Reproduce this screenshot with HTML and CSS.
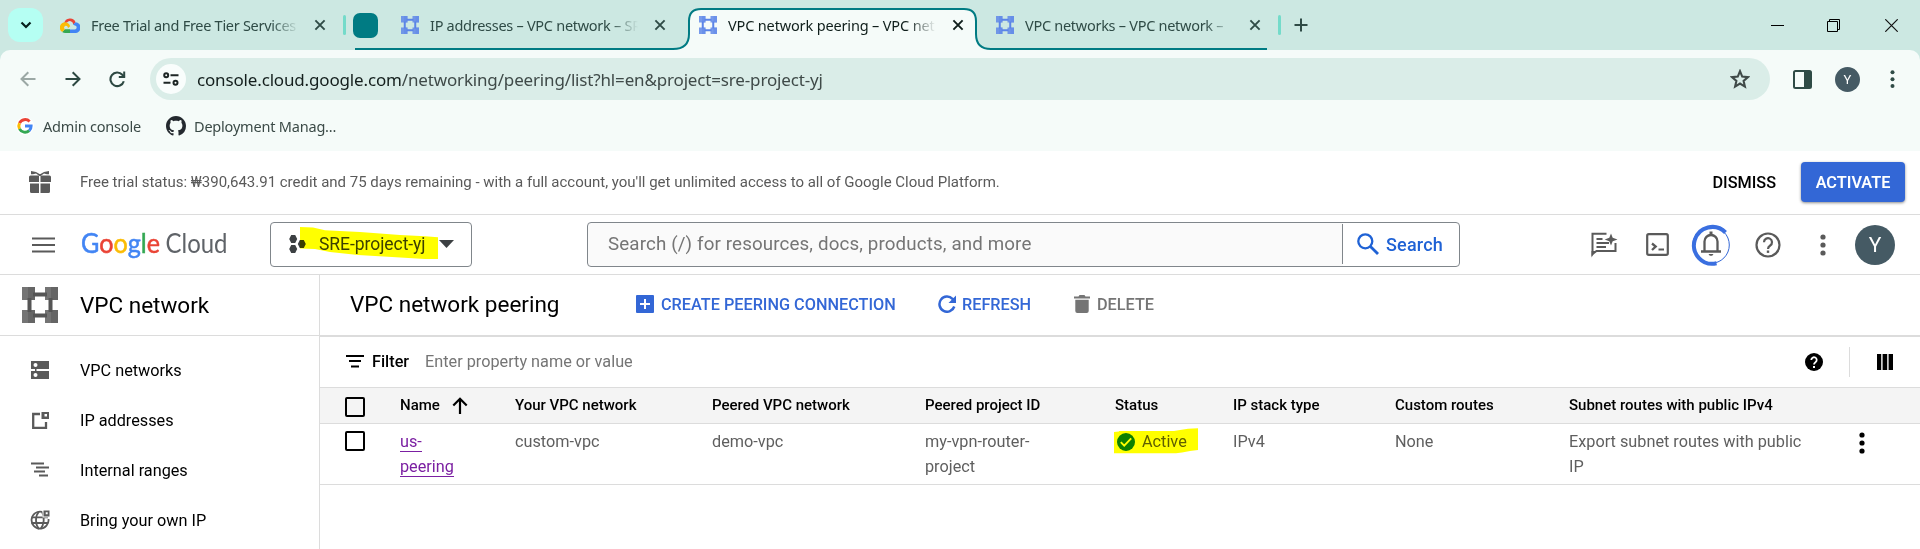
FILE: index.html
```html
<!DOCTYPE html>
<html lang="en">
<head>
<meta charset="utf-8">
<title>VPC network peering – VPC network</title>
<link rel="stylesheet" href="styles.css">
</head>
<body>
<svg class="defs" width="0" height="0" aria-hidden="true">
  <defs>
    <symbol id="vpc" viewBox="0 0 36 36">
      <path d="M5.500 11h4v14h-4zM26.500 11h4v14h-4zM11 5.500h14v4H11zM11 26.500h14v4H11z"/>
      <path d="M0 0h13v13H0zM23 0h13v13H23zM0 23h13v13H0zM23 23h13v13H23z" opacity=".82"/>
      <path d="M6 0h7v13H6zM29 0h7v13h-7zM6 23h7v13H6zM29 23h7v13h-7z" opacity=".45"/>
    </symbol>
    <symbol id="x" viewBox="0 0 12 12"><path d="M1.400 1.400l9.200 9.200M10.600 1.400l-9.200 9.200" fill="none" stroke="currentColor" stroke-width="1.900"/></symbol>
    <symbol id="dots" viewBox="0 0 6 22"><circle cx="3" cy="3" r="2.600"/><circle cx="3" cy="11" r="2.600"/><circle cx="3" cy="19" r="2.600"/></symbol>
  </defs>
</svg>

<div class="strip">
  <svg class="outline" width="1920" height="52" viewBox="0 0 1920 52">
    <path d="M673 52V49Q689 49 689 34V21Q689 9 701 9H964Q976 9 976 21V34Q976 49 991 49V52Z" fill="#f5fbf9"/>
    <path d="M355 49H673Q689 49 689 34V21Q689 9 701 9H964Q976 9 976 21V34Q976 49 991 49H1267" fill="none" stroke="#007b83" stroke-width="2"/>
  </svg>
  <div class="tabsearch"><svg width="12" height="8" viewBox="0 0 12 8"><path d="M1.500 1.500L6 6l4.500-4.500" fill="none" stroke="#06201c" stroke-width="2.200"/></svg></div>
  <div class="tab tab-first">
    <svg width="20" height="16" viewBox="0 0 20 16">
      <path d="M4.200 6.200A6 6 0 0 1 15.600 5.200L13.200 7.500A3.400 3.400 0 0 0 7 5.500z" fill="#ea4335"/>
      <path d="M15.600 5.200A5.400 5.400 0 0 1 14.700 16H10v-3.600h4.600A1.900 1.900 0 0 0 14.800 8.500L13 7.600z" fill="#4285f4"/>
      <path d="M10 16H5.300A5.300 5.300 0 0 1 2.200 15L4.800 12.300H10z" fill="#34a853"/>
      <path d="M2.200 15A5.300 5.300 0 1 1 10.200 9.200L7.600 11.600A1.850 1.850 0 1 0 5 12.300z" fill="#fbbc05"/>
    </svg>
    <span class="tabtitle">Free Trial and Free Tier Services</span>
    <svg class="close" width="12" height="12"><use href="#x"/></svg>
  </div>
  <i class="tabsep"></i>
  <i class="chip"></i>
  <div class="tab tab-ip">
    <svg class="fav" width="18" height="18"><use href="#vpc"/></svg>
    <span class="tabtitle">IP addresses – VPC network – SR</span>
    <svg class="close" width="12" height="12"><use href="#x"/></svg>
  </div>
  <div class="tab tab-active">
    <svg class="fav" width="18" height="18"><use href="#vpc"/></svg>
    <span class="tabtitle">VPC network peering – VPC net</span>
    <svg class="close" width="12" height="12"><use href="#x"/></svg>
  </div>
  <div class="tab tab-nets">
    <svg class="fav" width="18" height="18"><use href="#vpc"/></svg>
    <span class="tabtitle">VPC networks – VPC network –</span>
    <svg class="close" width="12" height="12"><use href="#x"/></svg>
  </div>
  <i class="tabsep"></i>
  <svg class="newtab" width="14" height="14" viewBox="0 0 14 14"><path d="M7 .5v13M.5 7h13" stroke="#2f4b46" stroke-width="2"/></svg>
  <div class="winctl">
    <svg width="13" height="13" viewBox="0 0 13 13"><path d="M0 6.500h13" stroke="#000"/></svg>
    <svg width="13" height="13" viewBox="0 0 13 13"><path d="M.5 2.500h10v10H.5zM2.500 2.500v-2h10v10h-2" fill="none" stroke="#000"/></svg>
    <svg class="winclose" width="13" height="13" viewBox="0 0 13 13"><path d="M.3.3l12.400 12.400M12.700.3L.3 12.700" stroke="#111" stroke-width="1.200"/></svg>
  </div>
</div>

<div class="toolbar">
  <div class="nav">
    <svg class="back" width="16" height="16" viewBox="0 0 16 16"><path d="M15.500 8H2M8.300 1.200L1.500 8l6.800 6.800" fill="none" stroke="#9ba8a5" stroke-width="2"/></svg>
    <svg class="fwd" width="16" height="16" viewBox="0 0 16 16"><path d="M.5 8H14M7.700 1.200L14.500 8l-6.800 6.800" fill="none" stroke="#2d4842" stroke-width="2"/></svg>
    <svg class="reload" width="17" height="17" viewBox="0 0 17 17"><path d="M14.800 10.200A6.800 6.800 0 1 1 13.300 3.700L15.500 6" fill="none" stroke="#2d4842" stroke-width="2.100"/><path d="M16.200 .5V7H9.800V5h4.400V.5z" fill="#2d4842"/></svg>
    <div class="omni">
      <span class="site"><svg width="16" height="14" viewBox="0 0 16 14"><g fill="none" stroke="#1d2625" stroke-width="2"><circle cx="3.200" cy="3.200" r="2"/><path d="M7.500 3.200H15.500M.5 10.800H7.500"/><circle cx="12.500" cy="10.800" r="2"/></g></svg></span>
      <span class="url"><b>console.cloud.google.com</b>/networking/peering/list?hl=en&amp;project=sre-project-yj</span>
      <svg class="star" width="20" height="20" viewBox="0 0 20 20"><path d="M10 2.200l2.200 5.400 5.800.5-4.400 3.800 1.300 5.700L10 14.600l-4.900 3 1.300-5.700L2 8.100l5.800-.5z" fill="none" stroke="#3f4a48" stroke-width="2.100"/></svg>
    </div>
    <svg class="panel" width="19" height="19" viewBox="0 0 19 19"><rect x="1" y="1" width="17" height="17" rx="1.500" fill="none" stroke="#2f4b46" stroke-width="2"/><path d="M11 1h7v17h-7z" fill="#2f4b46"/></svg>
    <span class="ava small">Y</span>
    <svg class="bdots" width="5" height="18" viewBox="0 0 5 18" fill="#2f4b46"><circle cx="2.500" cy="2.300" r="2"/><circle cx="2.500" cy="9.200" r="2"/><circle cx="2.500" cy="16" r="2"/></svg>
  </div>
  <div class="marks">
    <svg width="18" height="18" viewBox="0 0 18 18"><circle cx="9" cy="9" r="9" fill="#fff"/><g fill="none" stroke-width="3"><path d="M13.600 4.500A6.200 6.200 0 0 0 3.500 6.200" stroke="#ea4335"/><path d="M3.500 6.200a6.200 6.200 0 0 0 0 5.700" stroke="#fbbc05"/><path d="M3.500 11.900a6.200 6.200 0 0 0 9.700 1.700" stroke="#34a853"/><path d="M13.200 13.600A6.200 6.200 0 0 0 15.100 9H9" stroke="#4285f4"/></g></svg>
    <span class="mk1">Admin console</span>
    <svg width="20" height="20" viewBox="0 0 16 16"><path fill="#24292f" d="M8 0C3.580 0 0 3.580 0 8c0 3.540 2.290 6.530 5.470 7.590.4.070.55-.17.55-.38 0-.19-.01-.82-.01-1.490-2.010.37-2.530-.49-2.690-.94-.09-.23-.48-.94-.82-1.130-.28-.15-.68-.52-.01-.53.63-.01 1.080.58 1.230.82.72 1.210 1.870.87 2.330.66.07-.52.28-.87.51-1.070-1.780-.2-3.640-.89-3.640-3.950 0-.87.31-1.590.82-2.150-.08-.2-.36-1.020.08-2.120 0 0 .67-.21 2.200.82.64-.18 1.320-.27 2-.27s1.360.09 2 .27c1.530-1.040 2.200-.82 2.200-.82.44 1.100.16 1.920.08 2.120.51.56.82 1.270.82 2.150 0 3.070-1.870 3.750-3.650 3.950.29.25.54.73.54 1.480 0 1.070-.01 1.930-.01 2.200 0 .21.15.46.55.38A8.010 8.010 0 0 0 16 8c0-4.420-3.580-8-8-8z"/></svg>
    <span class="mk2">Deployment Manag...</span>
  </div>
</div>

<div class="promo">
  <svg width="24" height="24" viewBox="0 0 24 24" fill="#5a5a5a"><path d="M3 1l5 1 3.500 2h1L16 2l5-1v3.300h-2L16 3.600 12.500 6h-1L8 3.600 5 4.300H3z"/><path d="M2.500 5.500H11V12H1V7a1.500 1.500 0 0 1 1.500-1.500zM12.500 5.500H21.500A1.500 1.500 0 0 1 23 7v5H12.500zM2 13.500h9V23H3.500A1.500 1.500 0 0 1 2 21.500zM12.500 13.500H22v8a1.500 1.500 0 0 1-1.500 1.500h-8z"/></svg>
  <span class="promotext">Free trial status: ₩390,643.91 credit and 75 days remaining - with a full account, you'll get unlimited access to all of Google Cloud Platform.</span>
  <span class="dismiss">DISMISS</span>
  <span class="activate">ACTIVATE</span>
</div>

<div class="header">
  <svg class="burger" width="23" height="16" viewBox="0 0 23 16"><path d="M0 1.500h23M0 8h23M0 14.500h23" stroke="#5a5a5a" stroke-width="2.200"/></svg>
  <svg class="logo" width="148" height="34" viewBox="0 0 148 34">
    <text x="0" y="25" textLength="79" lengthAdjust="spacingAndGlyphs" class="google"><tspan class="g-blue">G</tspan><tspan class="g-red">o</tspan><tspan class="g-yellow">o</tspan><tspan class="g-blue">g</tspan><tspan class="g-green">l</tspan><tspan class="g-red">e</tspan></text>
    <text x="84.500" y="25" textLength="62" lengthAdjust="spacingAndGlyphs" class="cloud">Cloud</text>
  </svg>
  <div class="picker">
    <svg width="18" height="18" viewBox="0 0 18 18" fill="#3c4043"><path d="M2.200 0h4L8.200 4l-2 4h-4L.2 4zM2.200 10h4l2 4-2 4h-4l-2-4zM10.800 5h4l2 4-2 4h-4l-2-4z"/></svg>
    <span>SRE-project-yj</span>
    <svg width="15" height="8" viewBox="0 0 15 8"><path d="M0 0h15L7.500 8z" fill="#3c4043"/></svg>
    <svg class="mark-project" width="140" height="34" viewBox="0 0 140 34"><path d="M0 0L13 .5 25 3.300 60 5 100 8 125 9.300l13 1V32H125L92 30 58 28 30 25 15 22 0 21.500z" fill="#ff0"/></svg>
  </div>
  <div class="search">
    <span class="hint">Search (/) for resources, docs, products, and more</span>
    <span class="go"><svg width="22" height="22" viewBox="0 0 22 22"><circle cx="8.300" cy="8.300" r="7" fill="none" stroke="#1f62d5" stroke-width="2.300"/><path d="M13.200 13.200l7.800 7.800" stroke="#1f62d5" stroke-width="2.800"/></svg><span>Search</span></span>
  </div>
  <div class="tools">
    <svg class="i-note" width="28" height="28" viewBox="0 0 28 28"><g fill="none" stroke="#5a5a5a" stroke-width="2"><path d="M16.500 2.800H2.500V23L6.500 20H25.500V12"/><path d="M6.500 8h6M6.500 12h12.500M6.500 16h9.500"/></g><path d="M21 2.500l1.700 4.300L27.500 8.500l-4.800 1.800L21 14.500l-1.700-4.200-4.600-1.800 4.600-1.700z" fill="#5a5a5a"/><path d="M1.500 20h4l-4 6.500z" fill="#5a5a5a"/></svg>
    <svg class="i-shell" width="23" height="23" viewBox="0 0 23 23"><rect x="1.200" y="1.200" width="20.600" height="20.600" rx="1.500" fill="none" stroke="#5a5a5a" stroke-width="2.200"/><path d="M6 10.500l3.700 3-3.700 3.500" fill="none" stroke="#5a5a5a" stroke-width="2.300"/><path d="M12.500 16.500h5.500" stroke="#5a5a5a" stroke-width="2"/></svg>
    <svg class="i-bell" width="42" height="44" viewBox="0 0 42 44"><circle cx="21" cy="22" r="18.300" fill="none" stroke="#3367d6" stroke-width="1"/><path d="M35.500 9.500A18.400 18.400 0 1 0 26.500 40.300" fill="none" stroke="#3a6fe0" stroke-width="4"/><path d="M14.500 28V18.500a6.500 6.500 0 0 1 13 0V28M11 28.500h20" fill="none" stroke="#5a5a5a" stroke-width="2.300"/><path d="M19.500 8.500h3V12h-3zM18.500 31h5l-1.300 1.700h-2.400z" fill="#5a5a5a"/></svg>
    <svg class="i-help" width="26" height="26" viewBox="0 0 26 26"><circle cx="13" cy="13" r="11.500" fill="none" stroke="#5a5a5a" stroke-width="2.200"/><path d="M9 10.200a4 4 0 1 1 6.200 3.300Q13 14.900 13 17" fill="none" stroke="#5a5a5a" stroke-width="2.200"/><path d="M11.800 18.500h2.400v2.400h-2.400z" fill="#5a5a5a"/></svg>
    <svg class="i-dots" width="6" height="22" fill="#5a5a5a"><use href="#dots"/></svg>
    <span class="ava big">Y</span>
  </div>
</div>

<div class="main">
  <div class="side">
    <div class="sidehead"><svg width="36" height="36" fill="#555"><use href="#vpc"/></svg><span>VPC network</span></div>
    <div class="menu">
      <div class="item"><svg width="20" height="20" viewBox="0 0 20 20"><path d="M1 1h18v8H1zM1 11h18v8H1z" fill="#5a5a5a"/><circle cx="5.500" cy="5" r="2" fill="#fff"/><circle cx="5.500" cy="15" r="2" fill="#fff"/><path d="M5 9h1.500v2H5z" fill="#5a5a5a"/></svg><span>VPC networks</span></div>
      <div class="item"><svg width="20" height="20" viewBox="0 0 20 20"><path d="M10 4H3.200v13.800h12.800V12" fill="none" stroke="#5a5a5a" stroke-width="2.300"/><path d="M11.500 2h7.500v7h-7.500zm3 2v2.500h2.500V4z" fill="#5a5a5a" fill-rule="evenodd"/></svg><span>IP addresses</span></div>
      <div class="item"><svg width="20" height="20" viewBox="0 0 20 20"><path d="M1 3.500h13M6 7.500h13M4 11.500h11M9 15.500h9" stroke="#5a5a5a" stroke-width="2.200"/></svg><span>Internal ranges</span></div>
      <div class="item"><svg width="20" height="20" viewBox="0 0 20 20"><g fill="none" stroke="#5a5a5a" stroke-width="1.800"><path d="M12 1.800A8.500 8.500 0 1 0 18.500 9"/><path d="M1.500 7.300H18M1.500 13H18M9 1.500C5 6 5 14.500 9 19M12 1.800C15 7 14 15 10.500 19"/></g><path d="M12.500 0h7.500v7.500h-7.500z" fill="#fff"/><path d="M13.500.5h6v6h-6zm2.200 1.800v2h2v-2z" fill="#5a5a5a" fill-rule="evenodd"/></svg><span>Bring your own IP</span></div>
    </div>
  </div>
  <div class="content">
    <div class="titlebar">
      <h1>VPC network peering</h1>
      <span class="act a1"><svg width="18" height="18" viewBox="0 0 18 18"><path d="M1 0h16a1 1 0 0 1 1 1v16a1 1 0 0 1-1 1H1a1 1 0 0 1-1-1V1a1 1 0 0 1 1-1z" fill="#3367d6"/><path d="M9 4v10M4 9h10" stroke="#fff" stroke-width="2"/></svg><span>CREATE PEERING CONNECTION</span></span>
      <span class="act a2"><svg width="18" height="18" viewBox="0 0 18 18"><path d="M16.300 11.500A7.600 7.600 0 1 1 14.500 3.800L16 5.300" fill="none" stroke="#3367d6" stroke-width="2.500"/><path d="M18 .5v7.500h-7.500z" fill="#3367d6"/></svg><span>REFRESH</span></span>
      <span class="act a3"><svg width="16" height="18" viewBox="0 0 16 18"><path d="M0 1.500h4.500l1-1.500h5l1 1.500H16v2H0zM1.300 4.700h13.400V16a2 2 0 0 1-2 2H3.300a2 2 0 0 1-2-2z" fill="#757575"/></svg><span>DELETE</span></span>
    </div>
    <div class="filterbar">
      <svg width="18" height="13" viewBox="0 0 18 13"><path d="M0 1h18M3 6h12M5 11.500h8" stroke="#000" stroke-width="2.200"/></svg>
      <b>Filter</b><span class="prop">Enter property name or value</span>
      <svg class="fhelp" width="18" height="18" viewBox="0 0 18 18"><circle cx="9" cy="9" r="9"/><path d="M6.300 7a2.700 2.700 0 1 1 4.200 2.200Q9 10.200 9 11.600" fill="none" stroke="#fff" stroke-width="1.800"/><path d="M8 13h2v2H8z" fill="#fff"/></svg>
      <i class="fsep"></i>
      <svg width="16" height="16" viewBox="0 0 16 16"><path d="M0 0h4.200v16H0zM5.600 0h4.600v16H5.600zM11.600 0H16v16h-4.400z"/></svg>
    </div>
    <div class="grid thead">
      <i class="box"></i>
      <span class="nm">Name<svg width="16" height="17" viewBox="0 0 16 17"><path d="M8 17V2M1.300 8.500L8 1.800l6.700 6.700" fill="none" stroke="#000" stroke-width="2.200"/></svg></span>
      <span>Your VPC network</span><span>Peered VPC network</span><span>Peered project ID</span><span>Status</span><span>IP stack type</span><span>Custom routes</span><span>Subnet routes with public IPv4</span><span></span>
    </div>
    <div class="grid trow">
      <i class="box"></i>
      <span><a>us-</a><br><a>peering</a></span>
      <span>custom-vpc</span><span>demo-vpc</span><span>my-vpn-router-<br>project</span>
      <span class="status"><svg width="18" height="18" viewBox="0 0 18 18"><circle cx="9" cy="9" r="9" fill="#0d7f0f"/><path d="M3.800 9.200l3.400 3.400 7-7.200" fill="none" stroke="#fff" stroke-width="1.900"/></svg>Active<svg class="mark-status" width="84" height="26" viewBox="0 0 84 26"><path d="M0 4l5-.5V3h55l6-1 8-1.200L84 .3V22l-8 1-8 1.500-6 .8H0z" fill="#ff0"/></svg></span>
      <span>IPv4</span><span>None</span><span>Export subnet routes with public<br>IP</span>
      <svg class="rdots" width="6" height="22"><use href="#dots"/></svg>
    </div>
  </div>
</div>
</body>
</html>
```

FILE: styles.css
```css
* { box-sizing: border-box; }
html, body { height: 549px; overflow: hidden; }
body { margin: 0; background: #fff; font-family: Roboto, "Liberation Sans", sans-serif; color: #000; }
svg { display: block; flex: none; }
i { display: block; flex: none; }
.defs { position: absolute; }

/* Browser tab strip */
.strip { position: relative; display: flex; align-items: center; height: 50px; padding-left: 8px; background: #cce8e2; font-family: "Noto Sans", "Open Sans", sans-serif; }
.outline { position: absolute; left: 0; top: 0; }
.strip > *:not(.outline) { position: relative; }
.tabsearch { display: flex; align-items: center; justify-content: center; width: 35px; height: 34px; border-radius: 12px; background: #b5fff3; }
.tab { display: flex; align-items: center; height: 50px; color: #2f4b46; font-size: 14.5px; }
.tab-first { width: 300px; padding-left: 17px; }
.tab-ip { width: 311px; padding-left: 23px; }
.tab-active { width: 288px; padding-left: 10px; color: #0f1e1b; }
.tab-active .tabtitle { letter-spacing: -0.15px; }
.tab-nets { width: 301px; padding-left: 19px; }
.fav { fill: #5b84e8; }
.tabtitle { width: 208px; margin-left: 11px; overflow: hidden; white-space: nowrap; line-height: 24px; letter-spacing: -0.28px; -webkit-mask-image: linear-gradient(90deg, #000 180px, transparent 208px); mask-image: linear-gradient(90deg, #000 180px, transparent 208px); }
.close { margin-left: 16px; }
.tab-first .close { margin-left: 15px; }
.tabsep { width: 3px; height: 20px; border-radius: 2px; background: #74dbca; }
.chip { width: 25px; height: 25px; margin-left: 7px; border-radius: 7px; background: #007b83; }
.newtab { margin-left: 13px; }
.winctl { display: flex; gap: 43px; margin-left: auto; padding-right: 22px; }
.winclose { margin-left: 2px; }

/* Browser toolbar */
.toolbar { height: 101px; background: #f5fbf9; border-radius: 10px 10px 0 0; font-family: "Noto Sans", "Open Sans", sans-serif; }
body::before { content: ""; position: absolute; z-index: -1; left: 0; top: 50px; width: 100%; height: 12px; background: #cce8e2; }
.nav { display: flex; align-items: center; height: 58px; }
.back { margin-left: 20px; }
.fwd { margin-left: 29px; }
.reload { margin-left: 28px; }
.omni { display: flex; align-items: center; width: 1620px; height: 42px; margin-left: 24px; padding: 0 20px 0 6px; border-radius: 21px; background: #daede8; }
.site { display: flex; align-items: center; justify-content: center; width: 30px; height: 30px; border-radius: 50%; background: #f9fdfc; }
.url { margin-left: 11px; color: #3f4a48; font-size: 17px; white-space: nowrap; letter-spacing: -0.16px; }
.url b { font-weight: 400; color: #141f1d; }
.star { margin-left: auto; }
.panel { margin-left: 23px; }
.ava { display: flex; align-items: center; justify-content: center; flex: none; border-radius: 50%; background: #455a64; color: #fff; font-family: Roboto, sans-serif; }
.small { width: 25px; height: 25px; margin-left: 23px; font-size: 13px; }
.bdots { margin-left: 30px; }
.marks { display: flex; align-items: center; height: 36px; padding-left: 16px; color: #3b4a47; font-size: 14.5px; white-space: nowrap; letter-spacing: -0.2px; }
.mk1 { width: 123px; margin-left: 9px; }
.mk2 { margin-left: 8px; }

/* Trial banner */
.promo { display: flex; align-items: center; height: 64px; padding: 0 15px 1px 28px; border-bottom: 1px solid #dcdcdc; }
.promotext { margin-left: 28px; color: #5a5a5a; font-size: 15px; white-space: nowrap; letter-spacing: -0.01px; }
.dismiss { margin-left: auto; font-size: 16.25px; font-weight: 500; }
.activate { display: flex; align-items: center; justify-content: center; width: 104px; height: 40px; margin-left: 25px; border-radius: 4px; background: #3367d6; box-shadow: 0 1px 3px rgba(0,0,0,.45); color: #fff; font-size: 16.25px; font-weight: 600; }

/* Console header */
.header { display: flex; align-items: center; height: 60px; padding: 0 25px 0 32px; border-bottom: 1px solid #dcdcdc; }
.logo { margin-left: 26px; overflow: visible; }
.google { font-family: Lato, sans-serif; font-size: 26px; stroke-width: .5px; }
.g-blue { fill: #4285f4; stroke: #4285f4; }
.g-red { fill: #ea4335; stroke: #ea4335; }
.g-yellow { fill: #fbbc05; stroke: #fbbc05; }
.g-green { fill: #34a853; stroke: #34a853; }
.cloud { font-family: Lato, sans-serif; font-size: 26px; fill: #5f6368; }
.picker { position: relative; display: flex; align-items: center; width: 202px; height: 45px; margin-left: 41px; padding: 0 0 2px 18px; border: 1px solid #80868b; border-radius: 4px; color: #3c4043; font-size: 17.5px; white-space: nowrap; }
.picker span { width: 120px; margin-left: 12px; letter-spacing: -0.05px; }
.mark-project { position: absolute; left: 29px; top: 4px; mix-blend-mode: multiply; }
.search { display: flex; width: 873px; height: 45px; margin-left: 115px; border: 1px solid #80868b; border-radius: 4px; background: linear-gradient(90deg, #fafafa 755px, #fff 755px); }
.hint { width: 754px; padding-left: 20px; line-height: 43px; color: #757575; font-size: 18.75px; letter-spacing: 0.13px; white-space: nowrap; }
.go { display: flex; align-items: center; flex: 1; margin: 1px 0 2px; padding-left: 14px; border-left: 1px solid #80868b; color: #1f62d5; font-size: 18px; letter-spacing: 0.2px; font-weight: 500; }
.go span { margin-left: 7px; }
.tools { display: flex; align-items: center; margin-left: auto; }
.i-shell { margin-left: 28px; }
.i-bell { margin-left: 21px; }
.i-help { margin-left: 23px; }
.i-dots { margin-left: 39px; }
.big { width: 40px; height: 40px; margin-left: 29px; font-size: 21px; }

/* Sidebar */
.main { display: flex; height: 274px; }
.side { width: 320px; border-right: 1px solid #dcdcdc; }
.sidehead { display: flex; align-items: center; height: 61px; padding: 0 0 1px 22px; border-bottom: 1px solid #dcdcdc; font-size: 22.5px; }
.sidehead span { margin-left: 22px; }
.menu { padding-top: 9px; }
.item { display: flex; align-items: center; height: 50px; padding-left: 30px; font-size: 16.25px; }
.item span { margin-left: 30px; }

/* Content */
.content { flex: 1; }
.titlebar { display: flex; align-items: center; height: 62px; padding-bottom: 2px; border-bottom: 2px solid #dcdcdc; }
h1 { width: 286px; margin: 0 0 0 30px; font-size: 22.5px; font-weight: 400; }
.act { display: flex; align-items: center; color: #3367d6; font-size: 16.25px; font-weight: 500; white-space: nowrap; }
.a1 span { margin-left: 7px; }
.a1 { width: 302px; }
.a2 { width: 136px; }
.a2 span { margin-left: 6px; }
.a3 span { margin-left: 7px; }
.a3 { color: #757575; }
.filterbar { display: flex; align-items: center; height: 51px; padding: 0 27px 1px 26px; border-bottom: 1px solid #dcdcdc; font-size: 16.25px; }
.filterbar b { width: 53px; margin-left: 8px; font-weight: 500; }
.prop { color: #757575; }
.fhelp { margin-left: auto; }
.fsep { width: 1px; height: 30px; margin: 0 27px 0 26px; background: #dcdcdc; }
.grid { display: grid; grid-template-columns: 55px 115px 197px 213px 190px 118px 162px 174px 290px 20px; padding-left: 25px; white-space: nowrap; }
.thead { height: 36px; align-items: center; border-bottom: 1px solid #dcdcdc; background: #f4f4f4; font-size: 15px; font-weight: 500; }
.thead > span { padding-bottom: 1px; }
.nm { display: flex; align-items: center; }
.nm svg { margin-left: 12px; }
.box { width: 20px; height: 20px; border: 2px solid #000; border-radius: 2px; }
.thead .box { margin-top: 3px; }
.trow { height: 61px; padding-top: 5px; border-bottom: 1px solid #dcdcdc; color: #5f5f5f; font-size: 16.25px; line-height: 25px; }
.trow .box { margin-top: 2px; }
a { border-bottom: 1px solid #7b1fa2; color: #7b1fa2; }
.status { position: relative; display: flex; align-items: center; height: 25px; gap: 7px; padding-left: 2px; }
.mark-status { position: absolute; left: -1px; top: -1px; mix-blend-mode: multiply; }
.rdots { margin-top: 3px; }
```
